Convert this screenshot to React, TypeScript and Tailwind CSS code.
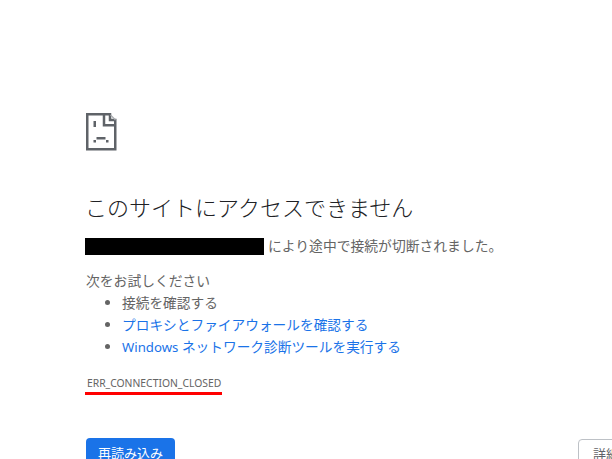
export default function App() {
  const font = "font-['Noto_Sans','Noto_Sans_CJK_JP',sans-serif]";
  return (
    <div className={`relative h-[459px] w-[612px] overflow-hidden bg-white pl-[86px] pt-[112px] text-[#646464] ${font}`}>
      {/* sad page icon */}
      <svg width="32" height="40" viewBox="0 0 32 40" className="block" fill="none">
        <path d="M1.25 2.25H24V8H29.25V37.25H1.25Z" stroke="#5f6368" strokeWidth="2.5" />
        <path d="M18 2V13.25H30" stroke="#5f6368" strokeWidth="2.5" />
        <path d="M24.5 3L29.5 8" stroke="#a8abaf" strokeWidth="1.2" />
        <rect x="7.5" y="9" width="2.5" height="6" fill="#5f6368" />
        <rect x="7.5" y="28" width="2.5" height="2.5" fill="#5f6368" />
        <rect x="20" y="28" width="2.5" height="2.5" fill="#5f6368" />
        <rect x="10.5" y="25" width="9" height="2.5" fill="#5f6368" />
      </svg>
      <h1 className="mt-[39px] -ml-px text-[22px] font-light leading-[32px] text-[#202124]">このサイトにアクセスできません</h1>
      <p className="mt-[13px] -ml-px flex items-center text-[13.8px] leading-[20px]">
        <span className="mt-[1px] h-[17px] w-[179px] bg-black" />
        <span className="ml-[4px]">により途中で接続が切断されました。</span>
      </p>
      <p className="mt-[14px] text-[13.8px] leading-[22px]">次をお試しください</p>
      <ul className="list-disc pl-[36px] text-[13.7px] leading-[22px] marker:text-[#646464]">
        <li>接続を確認する</li>
        <li className="text-[#1a73e8]">プロキシとファイアウォールを確認する</li>
        <li className="text-[#1a73e8]">
          <span className="text-[13.2px]">Windows</span> ネットワーク診断ツールを実行する
        </li>
      </ul>
      <div className="mt-[17px] -ml-px w-[137px] border-b-[3px] border-[#ff0000] pb-[1px] pl-[2px] text-[10.35px] leading-[16px]">
        ERR_CONNECTION_CLOSED
      </div>
      <div className="mt-[43px]">
        <button className="h-[32px] w-[89px] rounded-[4px] bg-[#1a73e8] text-[13px] text-white">再読み込み</button>
      </div>
      <button className="absolute left-[578px] top-[439px] h-[32px] w-[80px] rounded-[4px] border border-[#bdc1c6] pl-[14px] text-left text-[13px] text-[#5f6368]">
        詳細
      </button>
    </div>
  );
}
